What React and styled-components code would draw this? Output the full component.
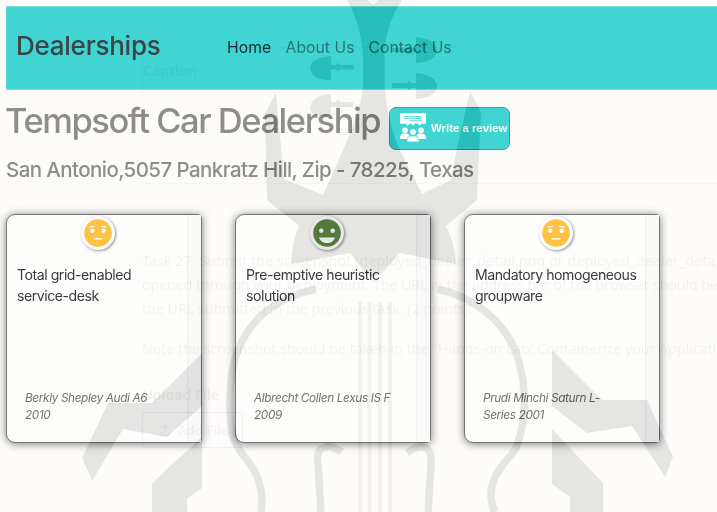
import React from "react";
import styled, { createGlobalStyle } from "styled-components";

const GlobalStyle = createGlobalStyle`
  * { box-sizing: border-box; }
  html, body { margin: 0; padding: 0; background: #fdfcfb; }
  body { width: 717px; height: 512px; overflow: hidden; font-family: Inter, "Liberation Sans", sans-serif; }
`;

const Page = styled.div`
  position: relative;
  width: 717px;
  height: 512px;
  overflow: hidden;
  padding: 6px 0 0 6px;
  background: #fdfcfb;
`;

const Navbar = styled.nav`
  height: 84px;
  display: flex;
  align-items: center;
  padding: 0 0 0 9px;
  background: #40d5d3;
  border: 1px solid #7ce3e0;
  border-right: 0;
  border-left-color: #66dfdc;
`;

const Brand = styled.span`
  width: 211px;
  padding-bottom: 5px;
  font-size: 26px;
  font-weight: 500;
  letter-spacing: -0.25px;
  color: #3d4447;
  white-space: nowrap;
`;

const NavLinks = styled.div`
  display: flex;
  gap: 14px;
`;

const NavLink = styled.a`
  width: ${(p) => p.$width}px;
  font-size: 15.7px;
  line-height: 24px;
  letter-spacing: 0.06px;
  white-space: nowrap;
  color: ${(p) => (p.$active ? "#142c2c" : "#2b7574")};
`;

const Heading = styled.header`
  display: flex;
  height: 60px;
`;

const Title = styled.h1`
  width: 383px;
  margin: 9px 0 0 -1px;
  font-size: 34.5px;
  line-height: 44px;
  font-weight: 500;
  letter-spacing: -1.45px;
  white-space: nowrap;
  color: #8e8d8c;
`;

const ReviewButton = styled.button`
  width: 121px;
  height: 43px;
  margin: 17px 0 0 1px;
  padding: 0 0 2px 9px;
  display: flex;
  align-items: center;
  gap: 4px;
  border: 1px solid #50979a;
  border-radius: 7px;
  background: #40d5d3;
  color: #fbffff;
  font: bold 11.4px "Liberation Sans", sans-serif;
  white-space: nowrap;
`;

const Address = styled.h4`
  margin: 6.5px 0 0;
  font-size: 20.5px;
  line-height: 26px;
  font-weight: 500;
  letter-spacing: -0.58px;
  white-space: nowrap;
  color: #8e8d8c;
`;

const Cards = styled.main`
  display: flex;
  gap: 33px;
  margin-top: 31.5px;
`;

const Card = styled.article`
  width: 196px;
  height: 229px;
  display: flex;
  border: 1px solid #777;
  border-top-width: 1.5px;
  border-radius: 9px 4px 4px 9px;
  background: #fdfdfb;
  box-shadow: 0 1px 9px rgba(0, 0, 0, 0.5);
`;

const CardBody = styled.div`
  flex: 1;
  display: flex;
  flex-direction: column;
  padding: 0 0 18px 10px;
`;

const ScrollTrack = styled.div`
  width: 14px;
  border-left: 1px solid #efefee;
  background: #f9f9f8;
`;

const FaceBadge = styled.div`
  width: 34px;
  height: 34px;
  display: grid;
  place-items: center;
  margin: 1px 0 0 64px;
  border-radius: 50%;
  background: #fff;
  box-shadow: 1px 1px 3px rgba(0, 0, 0, 0.42);
`;

const ReviewText = styled.p`
  margin: 14px 0 0;
  font-size: 14.1px;
  line-height: 21px;
  letter-spacing: -0.46px;
  color: #393d3f;
`;

const Reviewer = styled.p`
  width: 140px;
  margin: auto 0 0 8px;
  font-size: 11.8px;
  line-height: 17px;
  font-style: italic;
  letter-spacing: -0.37px;
  white-space: nowrap;
  color: #737372;
`;

const Watermark = styled.svg`
  position: absolute;
  inset: 0;
  mix-blend-mode: difference;
  pointer-events: none;
`;

const Ghost = styled.aside`
  position: absolute;
  left: 142px;
  top: 47px;
  width: 590px;
  color: rgba(0, 0, 0, 0.048);
  font: 14.2px/24px "Noto Sans", sans-serif;
  white-space: nowrap;
  pointer-events: none;
`;

const GhostCaption = styled.div`
  height: 137px;
  padding-top: 11px;
  font-weight: 600;
  border: 1px solid rgba(0, 0, 0, 0.025);
  border-right: 0;
`;

const GhostLine = styled.div`
  margin-top: ${(p) => p.$top || 0}px;
  font-weight: ${(p) => (p.$bold ? 600 : 400)};
  letter-spacing: ${(p) => p.$spacing || 0}px;
`;

const GhostButton = styled.div`
  width: 101px;
  height: 36px;
  margin-top: 5px;
  display: flex;
  align-items: center;
  gap: 7px;
  padding-left: 17px;
  border: 1px solid rgba(70, 90, 220, 0.08);
  border-radius: 2px;
  color: rgba(50, 60, 170, 0.06);
  font-size: 13px;
  font-weight: 600;
`;

function Face({ happy }) {
  return (
    <svg width="28" height="28" viewBox="0 0 28 28">
      <circle cx="14" cy="14" r="13.8" fill={happy ? "#6b9152" : "#ffc243"} />
      <g fill="#fff">
        <circle cx="8.3" cy="11.8" r="2.2" />
        <circle cx="19.7" cy="11.8" r="2.2" />
        {happy ? (
          <path d="M6 18.5h16c-1.1 3.5-4 5.6-8 5.6s-6.900-2.100-8-5.600z" />
        ) : (
          <g stroke="#fff" strokeWidth="1.200" strokeLinecap="round">
            <path d="M6 7.900l4.300-.5M17.500 7.400l4.500.5M10 19.900h8" />
          </g>
        )}
      </g>
    </svg>
  );
}

function ReviewIcon() {
  return (
    <svg width="28" height="31" viewBox="0 0 28 31" fill="#fbffff">
      <rect x="1" y="1.200" width="26" height="10.600" rx="1" />
      <path d="M7 11h4l-2.500 3zM12 11h4l-1.800 3zM18 11h4l-.8 3z" />
      <path d="M5 4.500h18M5 6.500h18M11 8.700h12" stroke="#40d5d3" strokeWidth=".8" />
      <circle cx="6" cy="18.300" r="2.900" />
      <circle cx="22" cy="18.300" r="2.900" />
      <path d="M1 27v-1c0-3.300 2-4.500 5-4.500s5 1.200 5 4.500v1zM17 27v-1c0-3.300 2-4.500 5-4.500s5 1.200 5 4.500v1z" />
      <g stroke="#40d5d3" strokeWidth=".8">
        <circle cx="14" cy="20" r="3.300" />
        <path d="M8 30v-1.500c0-3.200 2.400-4.800 6-4.800s6 1.600 6 4.800V30z" />
      </g>
    </svg>
  );
}

function ViolinWatermark() {
  return (
    <Watermark width="717" height="512" viewBox="0 0 717 512">
      <g fill="#181717">
        <path d="M347 0H367.500L373 5L378.500 0H402Q388 21 384.500 48V85Q388 125 400 150L422 194L451 180Q457 145 470 92L481 112L477 200L446 226Q454 241 456 264L400 253L384 271Q373 281 364 271L350 253L291 264Q292 243 299 226L267 200L265 114L276 92L284 179L323 195L347 141Q362 105 363 85V60Q362 26 347 0Z" />
        <path d="M331 56v9h5q2-4 4 0h14v4.500h-14q-2 4-4 0h-5v11q-20-1-21-12 1-11 21-12.500z" />
        <path d="M331 94v8h5q2-4 4 0h13v5h-13q-2 4-4 0h-5v9q-20 2-21-8 1-13 21-14z" />
        <path d="M416 37q20 2 21 13-1 12-21 13v-11h-5q-2 4-4 0h-15v-4h15q2-4 4 0h5z" />
        <path d="M416 73q20 2 21 13-1 12-21 13v-11h-5q-2 4-4 0h-15v-5h15q2-4 4 0h5z" />
        <path d="M202 353L152 403H108L82 458L92 481L123 429L167 437L202 406ZM202 437L152 483V512H187V499L202 488Z" />
        <path d="M552 350L602 400H647L673 457L665 477L632 426L587 433L552 406ZM552 429L603 483V512H570V497L552 484Z" />
      </g>
      <g fill="none" stroke="#181717" strokeWidth="7.500">
        <path d="M316 289C278 298 248 316 235 359C228 386 229 418 233 437Q237 448 247 460Q266 484 261 512" />
        <path d="M438 289C468 296 504 316 518 358C526 386 527 417 517 446Q514 452 506 461Q483 487 495 512" />
        <path d="M342 452Q330 444 323 448Q316 450 318 464L321 512M407 453Q419 444 426 448Q432 451 431 464L428 512" />
      </g>
      <path d="M360 302V512M369.500 302V512M380 302V512M390 302V512" stroke="#0c0c0c" strokeWidth="4" />
    </Watermark>
  );
}

const reviews = [
  { lines: ["Total grid-enabled", "service-desk"], by: ["Berkly Shepley Audi A6", "2010"] },
  { lines: ["Pre-emptive heuristic", "solution"], by: ["Albrecht Collen Lexus IS F", "2009"], happy: true },
  { lines: ["Mandatory homogeneous", "groupware"], by: ["Prudi Minchi Saturn L-", "Series 2001"] },
];

export default function App() {
  return (
    <Page>
      <GlobalStyle />
      <Navbar>
        <Brand>Dealerships</Brand>
        <NavLinks>
          <NavLink $active $width={44.5}>Home</NavLink>
          <NavLink $width={69}>About Us</NavLink>
          <NavLink $width={84}>Contact Us</NavLink>
        </NavLinks>
      </Navbar>
      <Heading>
        <Title>Tempsoft Car Dealership</Title>
        <ReviewButton><ReviewIcon />Write a review</ReviewButton>
      </Heading>
      <Address>San Antonio,5057 Pankratz Hill, Zip - 78225, Texas</Address>
      <Cards>
        {reviews.map((r) => (
          <Card key={r.lines[0]}>
            <CardBody>
              <FaceBadge><Face happy={r.happy} /></FaceBadge>
              <ReviewText>{r.lines[0]}<br />{r.lines[1]}</ReviewText>
              <Reviewer>{r.by[0]}<br />{r.by[1]}</Reviewer>
            </CardBody>
            <ScrollTrack />
          </Card>
        ))}
      </Cards>
      <Ghost>
        <GhostCaption>Caption</GhostCaption>
        <GhostLine $top={65} $spacing={0.1}>Task 27: Submit the screenshot (deployed_dealer_detail.png or deployed_dealer_deta</GhostLine>
        <GhostLine $spacing={-0.09}>opened through your deployment. The URL in the address bar of the browser should be</GhostLine>
        <GhostLine>the URL submitted in the previous task. (2 points).</GhostLine>
        <GhostLine $top={16} $spacing={-0.02}>Note the screenshot should be taken in the "Hands-on Lab: Containerize your Applicati</GhostLine>
        <GhostLine $top={22} $bold>Upload File</GhostLine>
        <GhostButton>
          <svg width="11" height="12" viewBox="0 0 11 12" fill="none" stroke="currentColor" strokeWidth="1.500">
            <path d="M5.500 8V1M2.500 4l3-3 3 3M1 8v3h9V8" />
          </svg>
          Add File
        </GhostButton>
      </Ghost>
      <ViolinWatermark />
    </Page>
  );
}
